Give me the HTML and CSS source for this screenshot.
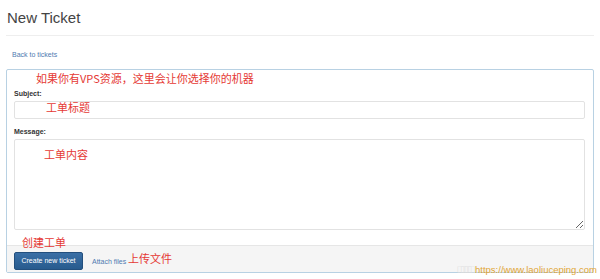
FILE: index.html
```html
<!DOCTYPE html>
<html lang="zh-CN">
<head>
    <meta charset="UTF-8">
    <title>New Ticket</title>
    <link rel="stylesheet" href="styles.css">
</head>
<body>
    <div class="page">
        <h1>New Ticket</h1>
        <hr>
        <a class="back" href="#">Back to tickets</a>

        <form class="panel">
            <span class="note note-vps">如果你有VPS资源，这里会让你选择你的机器</span>
            <div class="panel-body">
                <label class="field-label">Subject:</label>
                <div class="field">
                    <input type="text" class="input">
                    <span class="note note-subject">工单标题</span>
                </div>
                <label class="field-label">Message:</label>
                <div class="field">
                    <textarea class="textarea"></textarea>
                    <span class="note note-message">工单内容</span>
                </div>
            </div>
            <div class="panel-footer">
                <span class="note note-create">创建工单</span>
                <button type="button" class="btn">Create new ticket</button>
                <a class="attach" href="#">Attach files</a>
                <span class="note note-attach">上传文件</span>
            </div>
        </form>
    </div>

    <div class="watermark"><span class="tofu">□□□□</span>https://www.laoliuceping.com</div>
</body>
</html>
```

FILE: styles.css
```css
body {
    margin: 0;
    background: #ffffff;
    font-family: "Liberation Sans", Arial, sans-serif;
    color: #333;
    width: 600px;
    height: 279px;
    overflow: hidden;
    position: relative;
}

.page {
    padding: 0 6px 0 6px;
}

h1 {
    margin: 0 0 0 1px;
    padding-top: 9px;
    font-size: 15px;
    line-height: 18px;
    font-weight: normal;
    color: #444;
}

hr {
    border: none;
    border-top: 1px solid #eeeeee;
    margin: 8px 0 0 0;
}

.back {
    display: block;
    margin: 14px 0 0 6px;
    font-size: 7px;
    line-height: 9px;
    color: #4f7ab0;
    text-decoration: none;
}

.panel {
    position: relative;
    margin-top: 10px;
    width: 588px;
    border: 1px solid #b8d1e3;
    border-radius: 2px;
    box-sizing: border-box;
}

.panel-body {
    padding: 19px 8px 15px 7px;
}

.field-label {
    display: block;
    font-size: 7px;
    line-height: 9px;
    font-weight: bold;
    color: #333;
    margin-bottom: 3px;
}

.field {
    position: relative;
    margin-bottom: 8px;
}

.field:last-child {
    margin-bottom: 0;
}

.input,
.textarea {
    display: block;
    width: 571px;
    box-sizing: border-box;
    border: 1px solid #e2e2e2;
    border-radius: 2px;
    background: #fff;
    margin: 0;
    padding: 0;
}

.input {
    height: 18px;
}

.textarea {
    height: 91px;
    resize: vertical;
}

.panel-footer {
    position: relative;
    display: flex;
    align-items: center;
    height: 27px;
    padding: 0 7px;
    background: #f5f5f5;
    border-top: 1px solid #e6e6e6;
    box-sizing: border-box;
}

.btn {
    height: 18px;
    width: 69px;
    margin-top: 3px;
    padding: 0;
    border: 1px solid #234f7d;
    border-radius: 2px;
    background: linear-gradient(#3a6fa6, #285b8e);
    color: #fff;
    font-family: "Liberation Sans", Arial, sans-serif;
    font-size: 7px;
}

.attach {
    margin: 4px 0 0 9px;
    font-size: 7px;
    color: #4f7ab0;
    text-decoration: none;
}

.note {
    position: absolute;
    font-family: "Noto Sans CJK SC", "Liberation Sans", sans-serif;
    color: #e53935;
    font-size: 11px;
    line-height: 12px;
    white-space: nowrap;
}

.note-vps {
    left: 29px;
    top: 2px;
}

.note-subject {
    left: 32px;
    top: 0px;
}

.note-message {
    left: 30px;
    top: 9px;
}

.note-create {
    left: 15px;
    top: -10px;
}

.note-attach {
    left: 121px;
    top: 6px;
}

.watermark {
    position: absolute;
    right: 3px;
    bottom: 4px;
    font-size: 9.5px;
    line-height: 11px;
    color: #e1a535;
}

.tofu {
    color: #dcdcdc;
    font-size: 11px;
    letter-spacing: -3px;
    margin-right: 3px;
}
```
